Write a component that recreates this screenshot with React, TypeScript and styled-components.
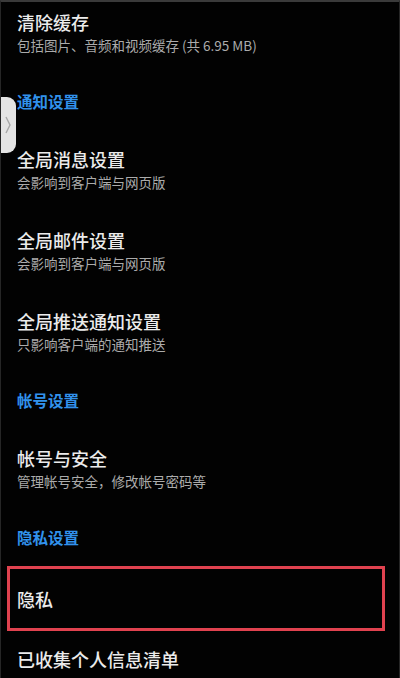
import React from "react";
import styled, { createGlobalStyle } from "styled-components";

const Global = createGlobalStyle`
  html, body { margin: 0; padding: 0; background: #000; }
  * { box-sizing: border-box; }
`;

const Screen = styled.div`
  position: relative;
  width: 400px;
  height: 678px;
  overflow: hidden;
  background: #020202;
  border-top: 2px solid #3a3a3a;
  border-left: 1px solid #262626;
  border-right: 1px solid #262626;
  font-family: "Noto Sans CJK SC", "Noto Sans", sans-serif;
  display: flex;
  flex-direction: column;
  & > * { flex-shrink: 0; }
`;

const Item = styled.div<{ $top?: number }>`
  display: flex;
  flex-direction: column;
  padding: ${(p) => p.$top ?? 18}px 16px 18px 16px;
`;

const Title = styled.div`
  font-size: 18px;
  line-height: 24px;
  color: #ebebeb;
  font-weight: 500;
  white-space: nowrap;
`;

const Sub = styled.div`
  margin-top: 1px;
  font-size: 13.5px;
  line-height: 20px;
  color: #ababab;
  white-space: nowrap;
`;

const Header = styled.div`
  padding: 18px 16px;
  font-size: 15.5px;
  line-height: 20px;
  color: #3192ec;
  font-weight: 600;
`;

const Highlight = styled.div`
  margin: 1px 14px 0 6px;
  height: 65px;
  border: 3px solid #e0424f;
  display: flex;
  align-items: center;
  padding: 0 7px;
`;

const Handle = styled.div`
  position: absolute;
  left: -1px;
  top: 95px;
  width: 16px;
  height: 56px;
  background: #e4e4e4;
  border-radius: 0 9px 9px 0;
  display: flex;
  align-items: center;
  justify-content: center;
`;

export default function App() {
  return (
    <>
      <Global />
      <Screen>
        <Item $top={8}>
          <Title>清除缓存</Title>
          <Sub>包括图片、音频和视频缓存 (共 6.95 MB)</Sub>
        </Item>
        <Header>通知设置</Header>
        <Item>
          <Title>全局消息设置</Title>
          <Sub>会影响到客户端与网页版</Sub>
        </Item>
        <Item>
          <Title>全局邮件设置</Title>
          <Sub>会影响到客户端与网页版</Sub>
        </Item>
        <Item>
          <Title>全局推送通知设置</Title>
          <Sub>只影响客户端的通知推送</Sub>
        </Item>
        <Header>帐号设置</Header>
        <Item>
          <Title>帐号与安全</Title>
          <Sub>管理帐号安全，修改帐号密码等</Sub>
        </Item>
        <Header>隐私设置</Header>
        <Highlight>
          <Title>隐私</Title>
        </Highlight>
        <Item $top={16}>
          <Title>已收集个人信息清单</Title>
        </Item>
        <Handle>
          <svg width="6" height="18" viewBox="0 0 6 18">
            <path d="M1 1 L5 9 L1 17" fill="none" stroke="#a8a8a8" strokeWidth="1.4" />
          </svg>
        </Handle>
      </Screen>
    </>
  );
}
